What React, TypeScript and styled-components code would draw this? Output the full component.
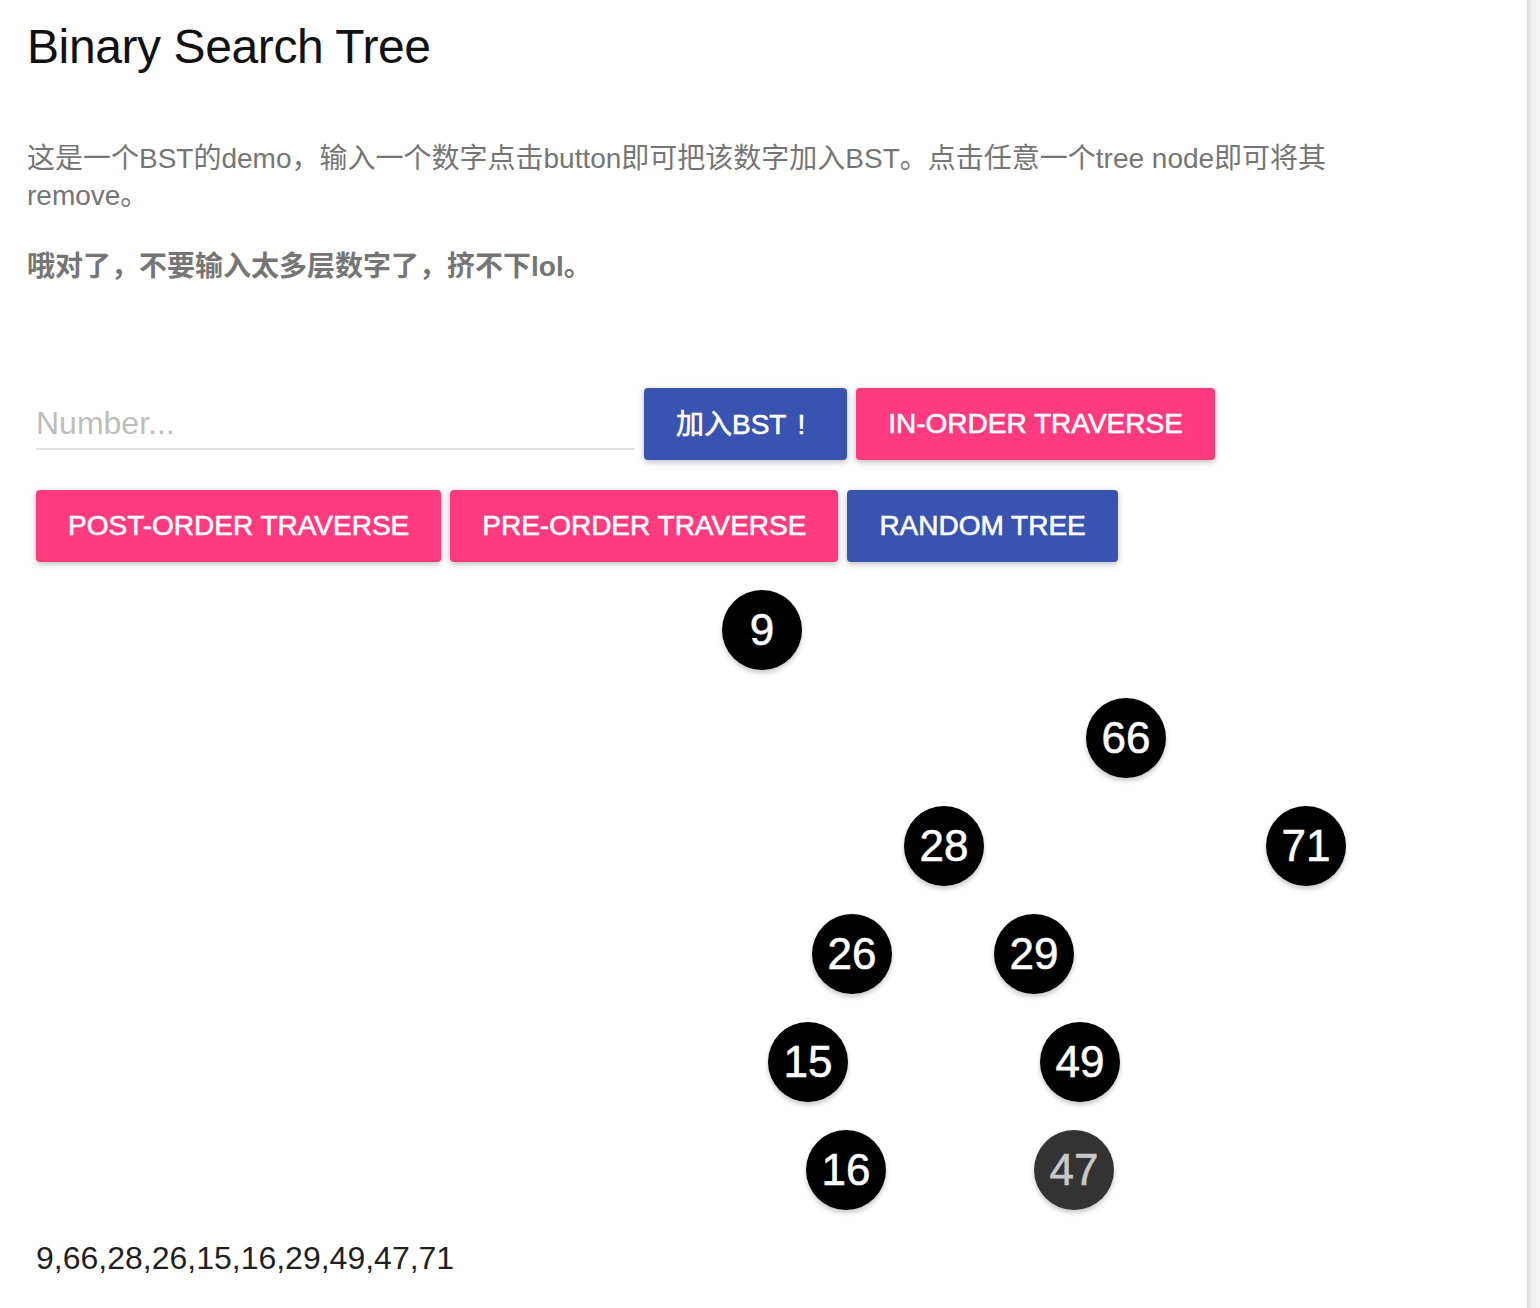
import React from "react";
import styled, { createGlobalStyle } from "styled-components";

const GlobalStyle = createGlobalStyle`
  body {
    margin: 0;
    background: #ffffff;
    font-family: "Liberation Sans", "Noto Sans CJK SC", Arial, sans-serif;
  }
`;

const Page = styled.div`
  display: flex;
  flex-direction: column;
`;

const ScrollTrack = styled.div`
  position: fixed;
  top: 0;
  right: 0;
  bottom: 0;
  width: 13px;
  background: linear-gradient(to right, #d4d4d4 0, #e6e6e6 2px, #f1f1f1 5px, #f6f6f6 100%);
`;

const Header = styled.header`
  padding: 0 0 0 27px;
  width: 1310px;
`;

const Title = styled.h1`
  margin: 19px 0 0 0;
  font-size: 48px;
  line-height: 56px;
  font-weight: 400;
  color: #111111;
  letter-spacing: -0.4px;
`;

const Para = styled.p<{ $bold?: boolean }>`
  margin: ${(p) => (p.$bold ? "34px 0 0 0" : "65px 0 0 0")};
  font-size: 28px;
  line-height: 37px;
  color: #757575;
  font-weight: ${(p) => (p.$bold ? 700 : 400)};
`;

const Controls = styled.div`
  display: flex;
  flex-direction: column;
  gap: 30px;
  padding-left: 36px;
  margin-top: 103px;
`;

const Row = styled.div`
  display: flex;
  align-items: flex-start;
`;

const NumberInput = styled.input`
  box-sizing: border-box;
  width: 599px;
  height: 62px;
  margin-right: 9px;
  padding: 10px 0 0 0;
  border: none;
  border-bottom: 2px solid #e0e0e0;
  outline: none;
  background: transparent;
  font-family: "Liberation Sans", "Noto Sans CJK SC", Arial, sans-serif;
  font-size: 32px;
  color: #212121;
  &::placeholder {
    color: #bdbdbd;
  }
`;

const Button = styled.button<{ $tone: "primary" | "accent"; $cjk?: boolean }>`
  box-sizing: border-box;
  height: 72px;
  margin-right: 9px;
  padding: 0 32px ${(p) => (p.$cjk ? "4px" : "0")} 32px;
  border: none;
  border-radius: 4px;
  background: ${(p) => (p.$tone === "primary" ? "#3953b0" : "#ff3a7f")};
  color: #ffffff;
  font-family: "Liberation Sans", "Noto Sans CJK SC", Arial, sans-serif;
  font-size: 28px;
  font-weight: 400;
  -webkit-text-stroke: 0.6px #ffffff;
  text-transform: uppercase;
  white-space: nowrap;
  cursor: pointer;
  box-shadow: 0 2px 8px rgba(0, 0, 0, 0.14), 0 2px 5px rgba(0, 0, 0, 0.14);
`;

const Bang = styled.span`
  padding: 0 10px 0 11px;
`;

const TreeCanvas = styled.div`
  position: relative;
  height: 640px;
  margin-top: 18px;
`;

const Node = styled.div<{ $active?: boolean }>`
  position: absolute;
  width: 80px;
  height: 80px;
  border-radius: 50%;
  background: ${(p) => (p.$active ? "#333333" : "#000000")};
  color: ${(p) => (p.$active ? "#c8c8c8" : "#ffffff")};
  display: flex;
  align-items: center;
  justify-content: center;
  font-size: 44px;
  line-height: 1;
  -webkit-text-stroke: 0.6px ${(p) => (p.$active ? "#c8c8c8" : "#ffffff")};
  box-shadow: 0 3px 5px rgba(0, 0, 0, 0.22);
  cursor: pointer;
`;

const Order = styled.div`
  padding-left: 36px;
  font-size: 32px;
  line-height: 37px;
  color: #1f1f1f;
  margin-top: 20px;
`;

type TreeNode = { value: number; cx: number; level: number; active?: boolean };

const nodes: TreeNode[] = [
  { value: 9, cx: 762, level: 0 },
  { value: 66, cx: 1126, level: 1 },
  { value: 28, cx: 944, level: 2 },
  { value: 71, cx: 1306, level: 2 },
  { value: 26, cx: 852, level: 3 },
  { value: 29, cx: 1034, level: 3 },
  { value: 15, cx: 808, level: 4 },
  { value: 49, cx: 1080, level: 4 },
  { value: 16, cx: 846, level: 5 },
  { value: 47, cx: 1074, level: 5, active: true },
];

const order = [9, 66, 28, 26, 15, 16, 29, 49, 47, 71];

export default function App() {
  return (
    <Page>
      <GlobalStyle />
      <Header>
        <Title>Binary Search Tree</Title>
        <Para>
          这是一个BST的demo，输入一个数字点击button即可把该数字加入BST。点击任意一个tree node即可将其remove。
        </Para>
        <Para $bold>哦对了，不要输入太多层数字了，挤不下lol。</Para>
      </Header>
      <Controls>
        <Row>
          <NumberInput placeholder="Number..." />
          <Button $tone="primary" $cjk>
            加入BST<Bang>!</Bang>
          </Button>
          <Button $tone="accent">In-order traverse</Button>
        </Row>
        <Row>
          <Button $tone="accent">Post-order traverse</Button>
          <Button $tone="accent">Pre-order traverse</Button>
          <Button $tone="primary">Random tree</Button>
        </Row>
      </Controls>
      <TreeCanvas>
        {nodes.map((n) => (
          <Node
            key={n.value}
            $active={n.active}
            style={{ left: n.cx - 40, top: 10 + n.level * 108 }}
          >
            {n.value}
          </Node>
        ))}
      </TreeCanvas>
      <Order>{order.join(",")}</Order>
      <ScrollTrack />
    </Page>
  );
}
